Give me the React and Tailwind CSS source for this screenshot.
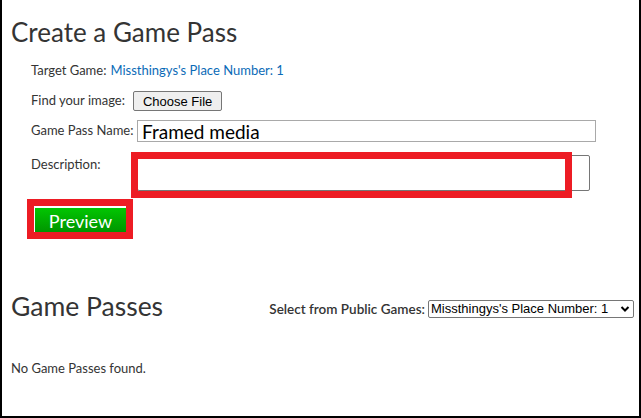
export default function App() {
  return (
    <div
      className="relative h-[418px] w-[641px] overflow-hidden bg-white border-l-2 border-r-2 border-b-2 border-black text-[#343434]"
      style={{ fontFamily: "Lato, 'Noto Sans', sans-serif" }}
    >
      <div className="pl-[9px] pt-[12px]">
        <h1 className="text-[26px] leading-[40px] text-[#343434]">Create a Game Pass</h1>

        <div className="pl-[20px] pt-[4px] text-[13px]">
          <div className="h-[30px] flex items-center">
            <span>Target Game:</span>
            <a className="ml-1 text-[#0b6bb7]">Missthingys's Place Number: 1</a>
          </div>

          <div className="h-[30px] flex items-center">
            <span>Find your image:</span>
            <button
              className="ml-[8px] h-[20px] px-[9px] border border-[#767676] rounded-[2px] bg-[#efefef] text-[13px] text-black leading-none"
              style={{ fontFamily: "'Liberation Sans', Arial, sans-serif" }}
            >
              Choose File
            </button>
          </div>

          <div className="h-[30px] flex items-center">
            <span className="w-[106px] shrink-0">Game Pass Name:</span>
            <div className="h-[22px] w-[459px] border border-[#a9a9a9] flex items-center pl-[4px] text-[19px] text-black leading-none">
              Framed media
            </div>
          </div>

          <div className="flex pt-[8px]">
            <span className="w-[106px] shrink-0 pt-[1px]">Description:</span>
            <div className="relative mt-[1px] h-[36px] w-[453px] border border-[#767676] rounded-[2px]">
              <div className="absolute left-[-7px] top-[-4px] h-[46px] w-[441px] border-[7px] border-[#ed1c24]" />
            </div>
          </div>

          <div className="relative mt-[17px] ml-[4px] h-[25px] w-[91px] bg-gradient-to-b from-[#02c602] to-[#009400] flex items-center justify-center text-[18px] text-white leading-none">
            Preview
            <div className="absolute left-[-8px] top-[-9px] h-[40px] w-[106px] border-[7px] border-[#ed1c24]" />
          </div>
        </div>

        <div className="mt-[53px] flex items-start">
          <h2 className="text-[26.5px] leading-[40px] text-[#343434]">Game Passes</h2>
          <div className="ml-auto mr-[5px] mt-[13px] flex items-center text-[13.5px] font-semibold">
            <span>Select from Public Games:</span>
            <div
              className="ml-[3px] h-[18px] w-[206px] border border-[#767676] rounded-[2px] flex items-center justify-between pl-[2px] pr-[3px] text-[13px] font-normal text-black"
              style={{ fontFamily: "'Liberation Sans', Arial, sans-serif" }}
            >
              <span>Missthingys's Place Number: 1</span>
              <svg width="10" height="10" viewBox="0 0 10 10" fill="none" stroke="black" strokeWidth="2">
                <path d="M1.5 3 L5 6.5 L8.5 3" />
              </svg>
            </div>
          </div>
        </div>

        <p className="mt-[33px] text-[13px]">No Game Passes found.</p>
      </div>
    </div>
  );
}
